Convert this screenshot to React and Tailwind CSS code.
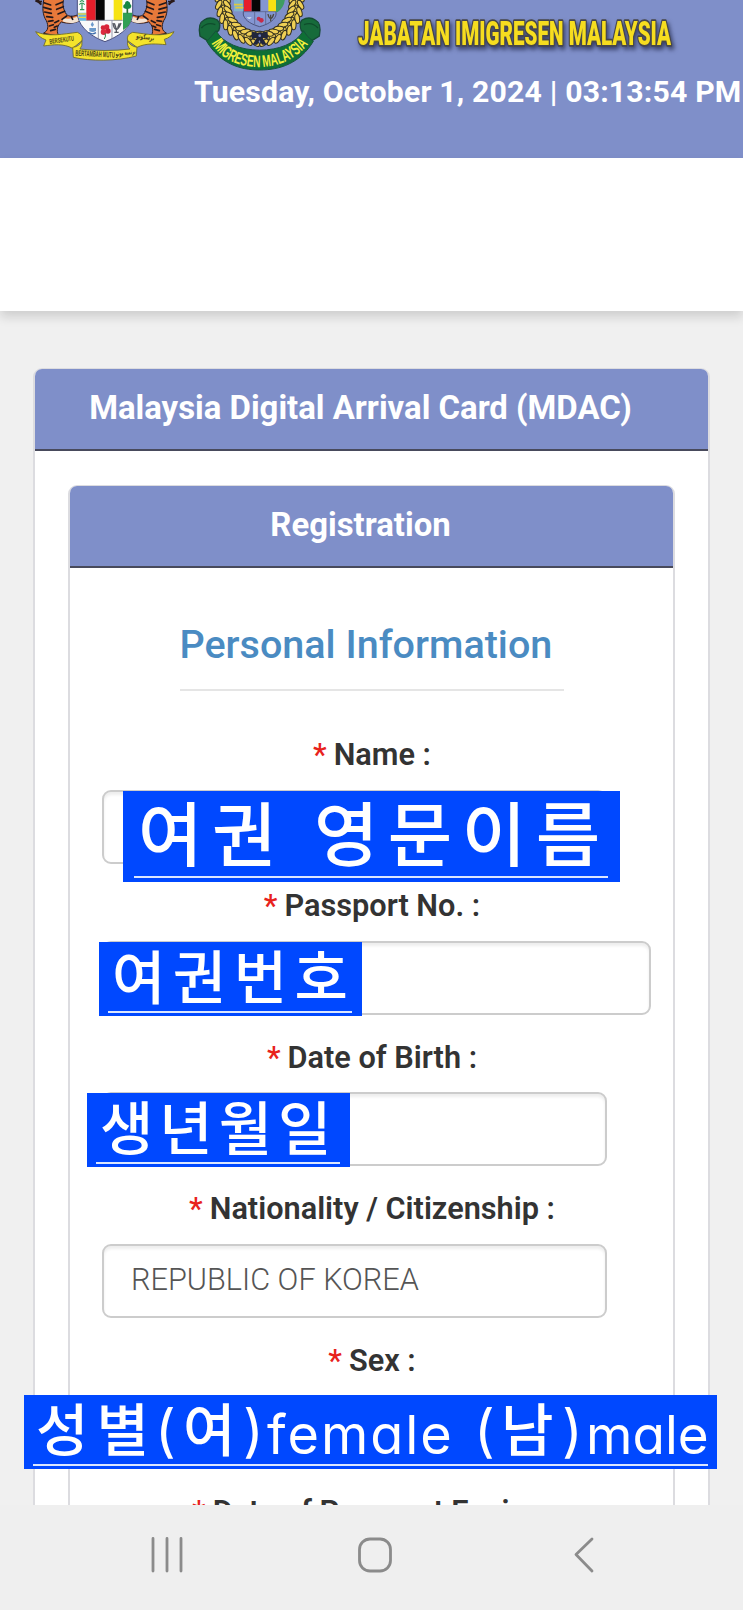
const LEAF_ANGLES = [-8, 2, 12, 22, 32, 42, 52, 62, 72, 82];

function Tiger() {
  return (
    <g>
      <path
        d="M132 -4 C126 25 128 45 139 62 C146 78 146 92 130 100 L176 108 C168 90 172 76 184 66 C204 72 226 70 238 62 L234 44 C216 52 202 50 196 38 C190 25 186 12 192 -4Z"
        fill="#e8793a"
        stroke="#2a1a1a"
        strokeWidth="3"
      />
      <path d="M188 64 C204 72 226 70 238 62 L236 48 C218 56 204 58 190 54Z" fill="#f3e3d4" />
      <path d="M106 2 q12 4 18 12 M112 -2 q4 10 14 6" stroke="#2a1a1a" strokeWidth="6" fill="none" />
      <path
        d="M132 8 l20 7 M131 22 l22 6 M134 36 l20 4 M140 50 l18 2 M145 64 l14 -2 M148 78 l12 -4 M188 6 l-20 8 M190 20 l-20 8 M194 34 l-20 8 M200 48 l-14 10 M176 62 l-12 6 M172 78 l-9 4 M152 92 l14 -4 M214 50 l4 8"
        stroke="#22181c"
        strokeWidth="5"
        strokeLinecap="round"
      />
    </g>
  );
}

function NationalCrest() {
  return (
    <g>
      <Tiger />
      <g transform="translate(630 0) scale(-1 1)">
        <Tiger />
      </g>
      <path d="M232 -4 H398 V45 C392 88 350 112 315 125 C280 112 240 88 232 45Z" fill="#fafafa" stroke="#4a5080" strokeWidth="3" />
      <path d="M234 38 H259 V62 H238Z" fill="#68b6dd" />
      <path d="M234 42 h25 M236 52 h23" stroke="#e9d64a" strokeWidth="4" />
      <path d="M246 30 V8 M238 14 q8 -10 16 0 M240 6 q6 -8 12 0 M240 29 h13" stroke="#2d9656" strokeWidth="3.5" fill="none" />
      <rect x="259" y="-4" width="28" height="65" fill="#e51e2b" />
      <rect x="287" y="-4" width="27" height="65" fill="#060606" />
      <rect x="341" y="-4" width="26" height="65" fill="#f6e312" />
      <path d="M369 38 H397 C395 66 388 78 369 90Z" fill="#2f9f55" />
      <path d="M382 40 V12" stroke="#2c6b35" strokeWidth="5" />
      <path d="M371 24 q-4 -9 4 -12 q0 -9 8 -9 q8 2 8 10 q6 5 0 12 q-10 5 -20 -1Z" fill="#168744" />
      <path d="M259 61 H368 M295 61 V117 M336 61 V117" stroke="#82859c" strokeWidth="2.5" fill="none" />
      <path d="M277 65 l5 9 -5 7 -5 -7Z" fill="#6d9acb" />
      <path d="M268 84 h20 v9 q-10 6 -20 0Z" fill="#6d9acb" />
      <path d="M266 98 q11 7 22 0" stroke="#416fae" strokeWidth="4" fill="none" />
      <circle cx="309" cy="83" r="7" fill="#d32638" />
      <circle cx="320" cy="81" r="8" fill="#db2539" />
      <circle cx="324" cy="93" r="8" fill="#c81f34" />
      <circle cx="311" cy="96" r="9" fill="#dd2b3e" />
      <path d="M315 100 q4 8 -2 17" stroke="#2f8a47" strokeWidth="3" fill="none" />
      <path d="M339 69 q2 17 10 20 q8 -3 14 -20 M343 70 l5 14 M358 70 l-5 14 M349 84 v12 M343 97 h13" stroke="#535660" strokeWidth="4" fill="none" />
      <g fill="#f4e32c" stroke="#6b6628" strokeWidth="2.5" strokeLinejoin="round">
        <path d="M107 95 C145 112 190 102 232 97 Q250 104 246 122 L218 145 C190 130 160 134 131 138 L138 120 Q116 112 107 95Z" />
        <path d="M522 95 C486 112 440 102 398 97 Q378 104 383 122 L411 142 C440 128 470 132 498 134 L493 118 Q514 112 522 95Z" />
        <path d="M218 142 Q238 140 246 122 Q248 138 240 147 C285 153 345 153 390 147 Q380 138 383 122 Q390 138 411 142 L409 168 C350 184 270 184 220 172Z" />
      </g>
      <g fill="#4b4618" fontFamily="Liberation Sans, sans-serif" fontWeight="700">
        <text x="149" y="132" fontSize="21" textLength="74" lengthAdjust="spacingAndGlyphs" transform="rotate(-8 149 132)">
          BERSEKUTU
        </text>
        <text x="226" y="167" fontSize="24" textLength="118" lengthAdjust="spacingAndGlyphs" transform="rotate(3 226 167)">
          BERTAMBAH MUTU
        </text>
        <text x="347" y="169" fontSize="21" fontFamily="DejaVu Sans, sans-serif" textLength="60" lengthAdjust="spacingAndGlyphs" transform="rotate(-8 347 169)">
          برتمبه موتو
        </text>
        <text x="408" y="114" fontSize="21" fontFamily="DejaVu Sans, sans-serif" textLength="54" lengthAdjust="spacingAndGlyphs" transform="rotate(8 408 114)">
          برسکوتو
        </text>
      </g>
    </g>
  );
}

function Laurel() {
  return (
    <g fill="#efcf55" stroke="#33301f" strokeWidth="3">
      {LEAF_ANGLES.map((a) => (
        <g key={a} transform={`rotate(${a} 779 6)`}>
          <ellipse cx="889" cy="6" rx="7" ry="14" />
          <ellipse cx="877" cy="10" rx="7" ry="15" transform="rotate(34 877 10)" />
          <ellipse cx="902" cy="10" rx="7" ry="15" transform="rotate(-30 902 10)" />
        </g>
      ))}
    </g>
  );
}

function ImmigrationCrest() {
  return (
    <g>
      <circle cx="779" cy="6" r="90" fill="#7f8fc9" stroke="#30324a" strokeWidth="3" />
      <path d="M730 -4 H828 V45 C822 64 800 74 779 80 C758 74 736 64 730 45Z" fill="#8496d2" stroke="#4c537c" strokeWidth="3" />
      <rect x="702" y="-4" width="28" height="38" fill="#7fb2cd" />
      <path d="M702 14 h26 M706 23 h24" stroke="#e0c83e" strokeWidth="5" />
      <path d="M828 -4 h27 q-2 26 -22 40 h-5Z" fill="#3d9c62" />
      <rect x="732" y="-4" width="23" height="39" fill="#e51e2b" />
      <rect x="755" y="-4" width="26" height="39" fill="#060606" />
      <rect x="805" y="-4" width="23" height="39" fill="#f6e312" />
      <path d="M732 35 H828 M764 35 V74 M797 35 V74" stroke="#5b648f" strokeWidth="2.5" />
      <path d="M740 52 h15 q-7 10 -15 0Z" fill="#cfe0f2" />
      <circle cx="776" cy="56" r="6" fill="#c72b48" />
      <circle cx="784" cy="61" r="7" fill="#c72b48" />
      <path d="M804 42 q2 12 8 14 q6 -2 9 -14 M812 44 v20" stroke="#4d4b45" strokeWidth="4" fill="none" />
      <Laurel />
      <g transform="translate(1558 0) scale(-1 1)">
        <Laurel />
      </g>
      <path d="M600 108 Q592 70 612 60 Q630 48 652 60 Q664 72 656 92 Q640 100 632 128Z" fill="#176b3b" stroke="#164b35" strokeWidth="4" />
      <path d="M958 108 Q966 70 946 60 Q928 48 906 60 Q896 72 904 92 Q918 100 926 128Z" fill="#176b3b" stroke="#164b35" strokeWidth="4" />
      <path d="M604 84 q18 -20 42 -10 M954 84 q-18 -20 -42 -10" stroke="#0f4c2c" strokeWidth="4" fill="none" />
      <path
        d="M648 92 C690 170 868 170 910 92 Q922 112 940 124 C900 190 840 210 779 210 C718 210 660 190 620 124 Q636 108 648 92Z"
        fill="#0e6f35"
        stroke="#16513a"
        strokeWidth="3"
      />
      <path id="ribbon" d="M634 130 C690 227 868 227 934 118" fill="none" />
      <text fill="#f3f03a" fontFamily="Liberation Sans Narrow, Liberation Sans, sans-serif" fontWeight="700" fontSize="50">
        <textPath href="#ribbon" textLength="336" lengthAdjust="spacingAndGlyphs">
          IMIGRESEN MALAYSIA
        </textPath>
      </text>
      <g fill="#20253c">
        <circle cx="779" cy="108" r="11" />
        <path d="M755 94 l20 6 v12 l-20 6Z M803 94 l-20 6 v12 l20 6Z M770 114 l-12 20 h14 l6 -14 8 14 h14 l-12 -20Z" />
      </g>
      <circle cx="779" cy="107" r="4" fill="#7182c0" />
    </g>
  );
}

function Banner() {
  return (
    <svg viewBox="0 0 743 75" className="block h-[75px] w-full overflow-hidden">
      <g transform="scale(0.33333)">
        <NationalCrest />
        <ImmigrationCrest />
      </g>
      <text
        x="358"
        y="44.5"
        textLength="313"
        lengthAdjust="spacingAndGlyphs"
        fontFamily="Roboto, sans-serif"
        fontWeight="900"
        fontSize="34"
        fill="#f6dd1f"
        stroke="#47474a"
        strokeWidth="3.6"
        strokeLinejoin="round"
        paintOrder="stroke"
        className="drop-shadow-[2px_3px_2px_rgba(30,35,70,0.7)]"
      >
        JABATAN IMIGRESEN MALAYSIA
      </text>
    </svg>
  );
}

function PanelHeader({ children }) {
  return (
    <div className="flex h-[82px] items-center justify-center rounded-t-[7px] border-b-2 border-[#484a5c] bg-[#7f8fc9] pr-[22px] pb-0.5 text-[32.9px] font-bold whitespace-nowrap text-white">
      {children}
    </div>
  );
}

function Label({ children }) {
  return (
    <div className="flex h-10 items-center justify-center gap-[7px] pl-px text-[30.7px] leading-10 font-semibold whitespace-nowrap text-[#333]">
      <span className="font-medium text-[#e8221c]">*</span>
      <span>{children}</span>
    </div>
  );
}

function Field({ label, width, children, note }) {
  return (
    <div className="relative h-[151.4px]">
      <Label>{label}</Label>
      <div
        className={`mt-[14.5px] ml-[32px] flex h-[74px] items-center rounded-[9px] border-2 border-[#ccc] bg-white pb-0.5 pl-[27px] text-[30.7px] font-light text-[#555] shadow-[inset_0_3px_3px_rgba(0,0,0,0.07)] ${width}`}
      >
        {children}
      </div>
      {note}
    </div>
  );
}

function Note({ className, line, children }) {
  return (
    <div
      className={`absolute z-10 bg-[#0048ff] font-['Inter','Noto_Sans_CJK_KR',sans-serif] font-medium whitespace-nowrap text-white ${className}`}
    >
      {children}
      <div className={`absolute h-0.5 bg-[#dbe6ff] ${line}`} />
    </div>
  );
}

export default function App() {
  return (
    <div className="flex h-[1610px] w-[743px] flex-col overflow-hidden bg-[#f0f0f0] font-['Roboto',sans-serif]">
      <header className="h-[158px] shrink-0 overflow-hidden bg-[#7f8fc9]">
        <Banner />
        <div className="-mt-[3px] pl-[194px] text-[30.2px] leading-[40px] font-bold tracking-[0.17px] whitespace-nowrap text-white">
          Tuesday, October 1, 2024 | 03:13:54 PM
        </div>
      </header>
      <div className="h-[153px] shrink-0 bg-white shadow-[0_6px_10px_rgba(0,0,0,0.14)]" />

      <main className="min-h-0 flex-1 overflow-hidden px-[33px] pt-[57px]">
        <section className="h-[1400px] rounded-t-[9px] border-2 border-t-1 border-[#dcdce0] bg-white">
          <PanelHeader>Malaysia Digital Arrival Card (MDAC)</PanelHeader>
          <div className="px-[33px] pt-[34px]">
            <section className="h-[1300px] rounded-t-[9px] border-2 border-t-1 border-[#dcdce0] bg-white">
              <PanelHeader>Registration</PanelHeader>
              <div className="mx-auto mt-[52px] h-[71px] w-[384px] border-b-2 border-[#e5e5e5] pt-px text-[39.5px] leading-[48px] font-medium whitespace-nowrap text-[#4a8bc2]">
                Personal Information
              </div>
              <div className="pt-[44px]">
                <Field
                  label="Name :"
                  width="w-[505px]"
                  note={
                    <Note
                      className="top-[56px] left-[53px] h-[91px] w-[497px] pl-[15px] text-[70px] leading-[90px] tracking-[9.5px]"
                      line="bottom-[4px] left-[11px] w-[474px]"
                    >
                      여권 영문이름
                    </Note>
                  }
                />
                <Field
                  label="Passport No. :"
                  width="w-[549px]"
                  note={
                    <Note
                      className="top-[56px] left-[29px] h-[74px] w-[263px] pl-[13px] text-[58px] leading-[72px] tracking-[7.5px]"
                      line="bottom-[3px] left-[9px] w-[244px]"
                    >
                      여권번호
                    </Note>
                  }
                />
                <Field
                  label="Date of Birth :"
                  width="w-[505px]"
                  note={
                    <Note
                      className="top-[55px] left-[17px] h-[74px] w-[263px] pl-[13px] text-[58px] leading-[72px] tracking-[6px]"
                      line="bottom-[3px] left-[9px] w-[244px]"
                    >
                      생년월일
                    </Note>
                  }
                />
                <Field label="Nationality / Citizenship :" width="w-[505px]">
                  REPUBLIC OF KOREA
                </Field>
                <Field
                  label="Sex :"
                  width="w-[505px]"
                  note={
                    <Note
                      className="top-[54px] left-[-46px] flex h-[74px] w-[693px] text-[57px] leading-[72px] [font-feature-settings:'cv11']"
                      line="bottom-[3px] left-[9px] w-[675px]"
                    >
                      <span className="w-[131px] pl-[12px] tracking-[8px]">성별</span>
                      <span className="w-[28px] font-normal">(</span>
                      <span className="w-[60px]">여</span>
                      <span className="w-[24px] font-normal">)</span>
                      <span className="w-[207px] pt-1 text-[54px] font-normal tracking-[2px]">female</span>
                      <span className="w-[27px] font-normal">(</span>
                      <span className="w-[61px]">남</span>
                      <span className="w-[24px] font-normal">)</span>
                      <span className="pt-1 text-[53px] font-normal">male</span>
                    </Note>
                  }
                />
                <Label>Date of Passport Expiry :</Label>
              </div>
            </section>
          </div>
        </section>
      </main>

      <nav className="relative z-20 h-[105px] shrink-0 bg-[#efefef]">
        <svg viewBox="0 0 743 105" className="block h-full w-full" fill="none" stroke="#8b8b8b" strokeWidth="2.8">
          <path d="M153 33.5V66 M167 33.5V66 M181 33.5V66" strokeLinecap="round" />
          <rect x="359.5" y="34" width="31" height="32" rx="10.5" />
          <path d="M592 34L576 49.5L592 66" strokeLinecap="round" strokeLinejoin="round" />
        </svg>
      </nav>
    </div>
  );
}
